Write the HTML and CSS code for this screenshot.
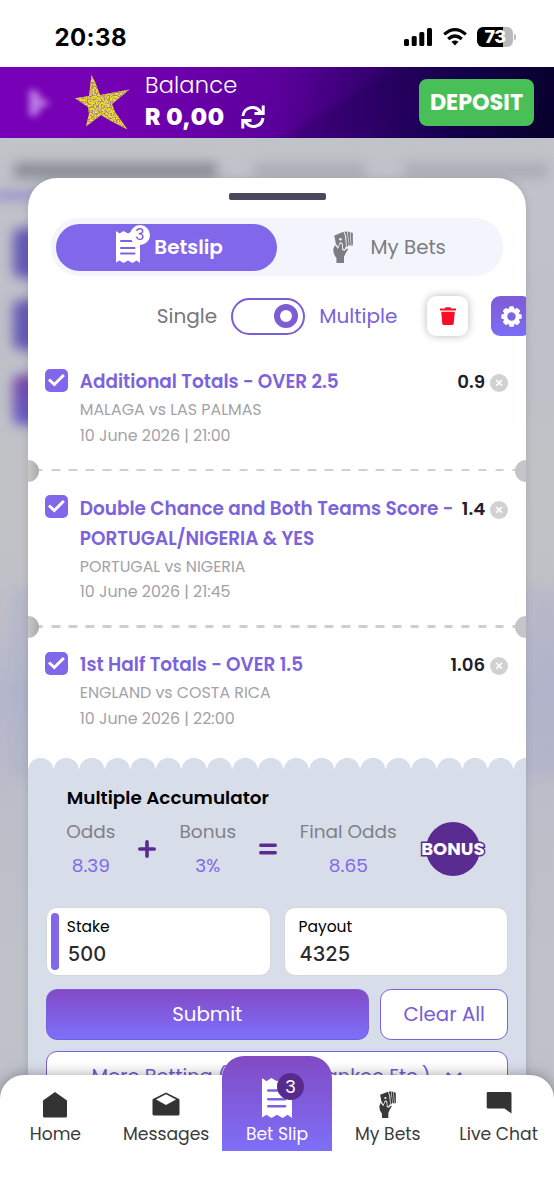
FILE: index.html
```
<!DOCTYPE html>
<html lang="en">
<head>
<meta charset="utf-8">
<title>Betslip</title>
<link rel="stylesheet" href="styles.css">
</head>
<body>
<svg class="defs" width="0" height="0" aria-hidden="true">
  <symbol id="receipt" viewBox="0 0 24 32">
    <path fill="currentColor" d="M0 1 Q0 0 1 .5 L3.500 2.600 L7.500 0 L12 2.600 L16.500 0 L20.500 2.600 L24 0 V32 L20.500 29.400 L16.500 32 L12 29.400 L7.500 32 L3.500 29.400 L0 31.500Z"/>
    <path class="receipt-lines" d="M5 10H16M5 17H18.500M5 22.500H18.500"/>
  </symbol>
  <symbol id="cash" viewBox="0 0 20 32">
    <g fill="currentColor">
      <path d="M1.300 4.500 L10.500 .8 L12 5 L13 15 L11.500 18.500 L10 17.500 L9.800 13 Q9 10.800 6.800 11.500 L5 16 L2.800 12.500Z"/>
      <path d="M11.400 .8 L14 .4 L15.800 14 L13.800 16.500 L13.200 5.500Z"/>
      <path d="M14.700 .6 L16.800 1 L17.800 13.500 L16.400 15Z"/>
      <path d="M17.500 1.300 L19.800 2 L19.900 14 L18.500 15.500Z"/>
      <path d="M2 14 L5 18 L7 13 Q9 11.500 9 15 L9.200 19 L11.500 19.800 L14.300 17.200 L15 18.500 L12.500 22.500 L11 26 V32 H3.500 L3.400 27 Q0 23 .3 18Z"/>
    </g>
    <circle class="cash-hole" cx="7.500" cy="8.300" r="1.300"/>
  </symbol>
  <symbol id="cross" viewBox="0 0 18 18">
    <circle cx="9" cy="9" r="9" fill="#d1d1d1"/>
    <path d="M6.300 6 L12 11.700M12 6 L6.300 11.700" stroke="#fff" stroke-width="1.700"/>
  </symbol>
  <symbol id="tick" viewBox="0 0 23 23">
    <rect width="23" height="23" rx="5" fill="#8167ea"/>
    <path d="M4 10.500 L9.300 15.500 L18.800 6" fill="none" stroke="#fff" stroke-width="3"/>
  </symbol>
</svg>
<div class="phone">
  <div class="status">
    <span class="clock">20:38</span>
    <div class="status-icons">
      <svg width="28" height="18" viewBox="0 0 28 18"><rect x="0" y="11" width="5" height="7" rx="1.500"/><rect x="7.700" y="8" width="5" height="10" rx="1.500"/><rect x="15.300" y="4" width="5" height="14" rx="1.500"/><rect x="23" y="0" width="5" height="18" rx="1.500"/></svg>
      <svg width="24" height="18" viewBox="0 0 24 18"><g fill="none" stroke="#000" stroke-width="3.200"><path d="M1.200 6.400 Q12 -3 22.800 6.400"/><path d="M5.200 11 Q12 5 18.800 11"/></g><path d="M8.500 13.800 Q12 11 15.500 13.800 L12 17.600Z"/></svg>
      <span class="battery"><span>73</span></span>
    </div>
  </div>

  <header class="header">
    <svg class="menu-blur" width="28" height="34" viewBox="0 0 28 34"><path d="M4 4 L12 4 L16 12 L26 17 L16 22 L12 30 L4 30Z" fill="#c58cec"/></svg>
    <svg class="star" width="56" height="56" viewBox="0 0 56 56">
      <filter id="grain" x="0" y="0" width="1" height="1">
        <feTurbulence type="fractalNoise" baseFrequency=".65" numOctaves="2" seed="7"/>
        <feColorMatrix values="0 0 0 0 .38  0 0 0 0 .26  0 0 0 0 .2  9 0 0 0 -4.100"/>
        <feComposite in2="SourceGraphic" operator="in" result="specks"/>
        <feMerge><feMergeNode in="SourceGraphic"/><feMergeNode in="specks"/></feMerge>
      </filter>
      <path filter="url(#grain)" fill="#f2dd22" d="M16.500 0 L20 7 L25 20 L54.500 14.500 L37 29 L40 37 L52.500 54.500 L36 46 L26 40 L11 51.500 L14 39 L13 32 L0 23.300 L14 21Z"/>
    </svg>
    <div class="balance">
      <span class="balance-label">Balance</span>
      <div class="balance-row"><b>R 0,00</b>
        <svg width="24" height="24" viewBox="0 0 24 24" fill="none" stroke="#fff" stroke-width="3"><path d="M2 11 C2.500 2 15 -1 20 8M22.200 .5 V8.500 H13.500"/><path d="M22 13 C21 22 9 25 4 16M1.800 23.500 V15.500 H10.500"/></svg>
      </div>
    </div>
    <button class="deposit">DEPOSIT</button>
  </header>

  <main class="stage">
    <div class="backdrop" aria-hidden="true">
      <i class="smudge heading"></i><i class="smudge heading second"></i><i class="smudge heading third"></i>
      <i class="smudge underline"></i><i class="smudge tile t1"></i><i class="smudge tile t2"></i><i class="smudge tile t3"></i>
      <i class="smudge haze"></i><i class="smudge haze right"></i>
    </div>

    <section class="sheet">
      <div class="grip"></div>
      <div class="tabs">
        <div class="tab active"><span class="slip-icon"><svg width="24" height="32"><use href="#receipt"/></svg><span class="count">3</span></span><b>Betslip</b></div>
        <div class="tab"><svg width="20" height="32"><use href="#cash"/></svg><span>My Bets</span></div>
      </div>
      <div class="mode">
        <span class="single">Single</span><span class="switch"><i></i></span><span class="multiple">Multiple</span>
        <button class="trash"><svg width="16" height="18" viewBox="0 0 16 18" fill="#f80c26"><path d="M0 1.500H5L5.500 .3H10.500L11 1.500H16V3.500H0Z"/><path d="M1.200 4.800H14.800L13.700 16.500Q13.500 18 12 18H4Q2.500 18 2.300 16.500Z"/></svg></button>
        <button class="gear"><svg width="21" height="21" viewBox="-10.500 -10.500 21 21"><g fill="#fff"><circle r="8.300"/><rect id="tooth" x="-2.600" y="-10.200" width="5.200" height="20.400" rx="1.500"/><use href="#tooth" transform="rotate(45)"/><use href="#tooth" transform="rotate(90)"/><use href="#tooth" transform="rotate(135)"/></g><circle r="4.200" fill="#7d65e4"/></svg></button>
      </div>

      <article class="bet">
        <svg class="check" width="23" height="23"><use href="#tick"/></svg>
        <div class="bet-body"><h3>Additional Totals − OVER 2.5</h3><p>MALAGA vs LAS PALMAS</p><p>10 June 2026 | 21:00</p></div>
        <b class="odd">0.9</b><svg class="remove" width="18" height="18"><use href="#cross"/></svg>
      </article>
      <div class="perforation"></div>
      <article class="bet">
        <svg class="check" width="23" height="23"><use href="#tick"/></svg>
        <div class="bet-body"><h3>Double Chance and Both Teams Score −<br>PORTUGAL/NIGERIA &amp; YES</h3><p>PORTUGAL vs NIGERIA</p><p>10 June 2026 | 21:45</p></div>
        <b class="odd">1.4</b><svg class="remove" width="18" height="18"><use href="#cross"/></svg>
      </article>
      <div class="perforation"></div>
      <article class="bet last">
        <svg class="check" width="23" height="23"><use href="#tick"/></svg>
        <div class="bet-body"><h3>1st Half Totals − OVER 1.5</h3><p>ENGLAND vs COSTA RICA</p><p>10 June 2026 | 22:00</p></div>
        <b class="odd">1.06</b><svg class="remove" width="18" height="18"><use href="#cross"/></svg>
      </article>

      <div class="scallop"></div>
      <div class="panel">
        <h2>Multiple Accumulator</h2>
        <div class="sum">
          <div class="col"><span>Odds</span><em>8.39</em></div>
          <svg width="18" height="18" viewBox="0 0 18 18"><path d="M9 1.800V16.200M1.800 9H16.200"/></svg>
          <div class="col"><span>Bonus</span><em>3%</em></div>
          <svg width="18" height="18" viewBox="0 0 18 18"><path d="M1.800 5.300H16.200M1.800 12.700H16.200"/></svg>
          <div class="col"><span>Final Odds</span><em>8.65</em></div>
          <div class="badge"><span>BONUS</span></div>
        </div>
        <div class="fields">
          <div class="field stake"><label>Stake</label><b>500</b></div>
          <div class="field"><label>Payout</label><b>4325</b></div>
        </div>
        <div class="actions"><button class="submit">Submit</button><button class="outline">Clear All</button></div>
        <button class="outline more"><span>More Betting (Doubles, Yankee Etc.)</span><svg width="18" height="12" viewBox="0 0 18 12"><path d="M2 2L9 9L16 2" fill="none" stroke="#7c60dc" stroke-width="3"/></svg></button>
      </div>
    </section>
  </main>

  <nav class="nav">
    <a><svg width="26" height="28" viewBox="0 0 26 28"><path d="M13 1 L25 9.500 V25 Q25 26.500 23.500 26.500 H2.500 Q1 26.500 1 25 V9.500Z"/></svg><span>Home</span></a>
    <a><svg width="28" height="26" viewBox="0 0 28 26"><path d="M14 1.500 L27 8 Q27.500 8.300 27.500 9 V23 Q27.500 24.500 26 24.500 H2 Q.5 24.500 .5 23 V9 Q.5 8.300 1 8Z"/><path class="flap" d="M14 3.200 L24 8.500 L14 14 L4 8.500Z"/></svg><span>Messages</span></a>
    <a class="current"><span class="slip-icon"><svg width="30" height="40"><use href="#receipt"/></svg><span class="count">3</span></span><span>Bet Slip</span></a>
    <a><svg width="17" height="27"><use href="#cash"/></svg><span>My Bets</span></a>
    <a><svg width="26" height="24" viewBox="0 0 26 24"><path d="M1.500 1 H24 Q25.500 1 25.500 2.500 V22.500 L18.500 17.500 H2 Q.7 17.500 .7 16 V2.500 Q.7 1 1.500 1Z"/></svg><span>Live Chat</span></a>
  </nav>
</div>
</body>
</html>
```
FILE: styles.css
```
* { box-sizing: border-box; }
body { margin: 0; background: #fff; font-family: Poppins, Inter, "Open Sans", sans-serif; }
button { font: inherit; border: 0; padding: 0; }
h2, h3, p { margin: 0; }
svg { display: block; flex: none; }
span, b { white-space: nowrap; }
.defs { position: absolute; }
.phone { position: relative; width: 554px; height: 1200px; overflow: hidden; display: flex; flex-direction: column; }

.status { height: 67px; padding: 3px 41px 0 54.500px; display: flex; align-items: center; justify-content: space-between; font-family: Inter, sans-serif; }
.clock { font-size: 24px; font-weight: 700; letter-spacing: .4px; margin-top: 4px; }
.status-icons { display: flex; align-items: center; gap: 10.500px; padding-top: 4px; }
.battery { position: relative; width: 36px; height: 20px; border-radius: 6px; background: linear-gradient(90deg, #000 73%, #b9b9b9 73%); color: #fff; font-weight: 800; font-size: 18px; line-height: 20px; letter-spacing: -.5px; text-align: center; }
.battery::after { content: ""; position: absolute; right: -3px; top: 7px; width: 2px; height: 6px; border-radius: 0 2px 2px 0; background: #b9b9b9; }

.header { height: 71px; display: flex; align-items: center; padding: 0 20px 0 25px; color: #fff; background: linear-gradient(148deg, transparent 58%, rgba(20,0,70,.25) 61%, transparent 80%), linear-gradient(100deg, #7900b9 0, #7200b1 25%, #5b009b 50%, #380074 64%, #14004c 81%, #07002b 100%); }
.menu-blur { filter: blur(3.500px); opacity: .85; margin-right: 22px; }
.balance { margin-left: 14px; flex: 1; margin-top: -3px; }
.balance-label { display: block; font-size: 22.500px; line-height: 32px; font-weight: 300; letter-spacing: .2px; }
.balance-row { display: flex; align-items: center; gap: 16px; font: 800 23px/32px Inter, sans-serif; letter-spacing: .6px; }
.deposit { width: 115px; height: 47px; border-radius: 8px; background: #49c057; color: #fff; font-size: 22.300px; font-weight: 700; }

.stage { position: relative; flex: 1; padding: 40px 28.300px 0; background: #bdc1ca; }
.backdrop { position: absolute; inset: 0; overflow: hidden; background: linear-gradient(#c0c4c9 0, #bdc0c9 18%, #c0c2c5 32%, #c0c1c7 43%, #b5b7cb 52%, #bbbdc8 62%, #bfc2c9 78%, #bdc0c8 100%); }
.smudge { position: absolute; filter: blur(6px); }
.heading { left: 14px; top: 25px; width: 203px; height: 15px; background: #888b93; }
.heading.second { left: 254px; width: 112px; background: #aaadb4; }
.heading.third { left: 404px; width: 144px; background: #aaadb4; }
.underline { left: -5px; top: 54px; width: 70px; height: 7px; background: #8d81cc; }
.tile { left: 13px; width: 60px; height: 50px; border-radius: 8px; background: #6659b5; }
.t1 { top: 90px; } .t2 { top: 162px; } .t3 { top: 237px; background: linear-gradient(#7845a8, #665cc9); }
.haze { left: 10px; top: 448px; width: 40px; height: 190px; background: #abaec9; opacity: .4; }
.haze.right { left: 525px; }

.sheet { position: relative; height: 1000px; border-radius: 29px 29px 0 0; overflow: hidden; background: #fff; box-shadow: 0 0 7px rgba(70,70,90,.2); }
.grip { width: 97px; height: 7px; margin: 15px auto 0; border-radius: 2px; background: #4b485b; }
.tabs { display: grid; grid-template-columns: 220.500px 1fr; height: 58px; margin: 18px 22.500px 0; padding: 5.500px; border-radius: 28px; background: #f3f5fd; }
.tab { display: flex; align-items: center; justify-content: center; gap: 18px; padding-left: 4px; border-radius: 24px; font-size: 19.800px; color: #7c7c82; }
.tab.active { gap: 14px; padding: 0 0 0 6px; color: #fff; background: #8167ea; }
.tab b { font-weight: 600; font-size: 20px; }
.slip-icon { position: relative; }
.slip-icon .count { position: absolute; left: 13.500px; top: -6px; width: 20px; height: 20px; border-radius: 50%; font-size: 15.500px; line-height: 20px; text-align: center; background: #fff; color: #7657d5; }
.receipt-lines { fill: none; stroke: #7b62df; stroke-width: 2; stroke-linecap: round; }
.cash-hole { fill: #f3f5fd; }

.mode { height: 72px; margin-top: 4px; padding-left: 128.500px; display: flex; align-items: center; font-size: 20px; color: #76767a; }
.mode > * { flex: none; }
.single { width: 74.500px; }
.switch { width: 74px; height: 37px; border: 2.500px solid #7c5dd2; border-radius: 19px; padding: 0 5.500px; display: flex; align-items: center; justify-content: flex-end; }
.switch i { width: 24px; height: 24px; border: 6px solid #7c5dd2; border-radius: 50%; }
.multiple { width: 108px; margin-left: 14px; color: #795fdb; }
.trash, .gear { display: flex; align-items: center; justify-content: center; height: 40px; }
.trash { width: 40.500px; border-radius: 9px; background: #fff; box-shadow: 0 0 8px rgba(0,0,0,.28); }
.gear { width: 40px; margin-left: 23.500px; border-radius: 9px; background: linear-gradient(#815bd5, #7b6cf7); }

.bet { display: flex; align-items: flex-start; padding: 22.500px 17.500px 20.500px 17px; }
.mode + .bet { padding-top: 15px; }
.bet.last { padding-bottom: 26px; }
.check { margin: 1.500px 11.500px 0 0; }
.bet-body { flex: 1; min-width: 0; }
h3 { font-size: 18.450px; line-height: 30px; font-weight: 600; color: #7c63dc; white-space: nowrap; }
.bet-body p { font-size: 15.850px; line-height: 25.600px; color: #a2a2a7; white-space: nowrap; }
.odd { font-size: 18.200px; line-height: 30px; font-weight: 600; color: #20202c; }
.remove { margin: 7px 0 0 5px; }
.perforation { position: relative; height: 2.500px; background: repeating-linear-gradient(90deg, #cfcfcf 0 8.500px, transparent 8.500px 17.070px) 6.500px 0; }
.perforation::before, .perforation::after { content: ""; position: absolute; top: -9px; width: 22px; height: 22px; border-radius: 50%; background: #bebec3; }
.perforation::before { left: -11px; background: linear-gradient(90deg, #c4c4c6 55%, #aaa 100%); }
.perforation::after { right: -11px; background: #c4c4c9; }

.scallop { height: 11.500px; background: radial-gradient(circle at 50% 12.500px, #d8ddea 12.300px, transparent 12.700px) 0 0 / 25.550px 11.500px repeat-x; }
.panel { height: 440px; padding: 13.500px 17.500px 0; background: #d8ddea; }
h2 { padding-left: 21px; font-size: 18.400px; line-height: 30px; font-weight: 600; }
.sum { display: grid; grid-template-columns: 58px 55px 66px 55px 105px 104px; width: 443px; height: 68px; margin: 2.500px 0 0 16px; align-items: center; justify-items: center; }
.sum > svg { fill: none; stroke: #5b2a91; stroke-width: 3.600; stroke-linecap: round; }
.col { display: flex; flex-direction: column; align-items: center; font-size: 18.500px; line-height: 34px; color: #7f8187; }
.col em { font-style: normal; color: #7f69e8; }
.badge { width: 54.500px; height: 54.500px; border-radius: 50%; background: #5a2b91; display: flex; align-items: center; justify-content: center; }
.badge span { margin-top: -2px; color: #fff; font-size: 18px; font-weight: 700; -webkit-text-stroke: 3px #5a2b91; paint-order: stroke fill; }
.fields { display: grid; grid-template-columns: 1fr 1fr; gap: 13px; margin-top: 24px; }
.field { position: relative; height: 69px; padding: 6px 14px; border: 1px solid #d6d6db; border-radius: 11px; background: #fff; display: flex; flex-direction: column; }
.stake { padding-left: 20px; }
.stake::before { content: ""; position: absolute; left: 4.500px; top: 5px; width: 7.500px; height: 57px; border-radius: 4px; background: #8167ea; }
.field label { font-size: 15.500px; line-height: 26px; }
.field b { font: 500 20px/28px Inter, sans-serif; color: #2b2b2d; padding-left: 1px; letter-spacing: .1px; }
.actions { display: grid; grid-template-columns: 1fr 128px; gap: 11.500px; margin-top: 12.500px; height: 51px; font-size: 19.800px; }
.submit { color: #fff; border: 1px solid #785fdb; border-radius: 11px; background: linear-gradient(#834ac6, #7d70fc); }
.outline { color: #775dd3; border: 1.500px solid #7c60dc; border-radius: 11px; background: #fff; }
.more { display: flex; justify-content: center; align-items: center; gap: 14px; width: 100%; height: 51px; margin-top: 11.500px; font-size: 19.300px; }

.nav { position: absolute; left: 0; right: 0; bottom: 0; height: 125px; display: grid; grid-template-columns: repeat(5, 1fr); align-items: start; border-radius: 24px 24px 0 0; background: #fff; box-shadow: 0 0 14px rgba(0,0,0,.35); color: #3a3a3a; font-size: 17.200px; }
.nav a { display: flex; flex-direction: column; align-items: center; height: 76px; padding-top: 16px; line-height: 26px; }
.nav a > svg { fill: #333; }
.nav a > span:last-child { margin-top: auto; margin-bottom: 4px; }
.nav .flap { fill: #fff; }
.nav .current { height: 95px; margin-top: -19px; padding-top: 22px; color: #fff; border-radius: 22px 22px 0 0; background: linear-gradient(#824ac3, #7e6ff8); }
.current .count { left: 15px; top: -5px; width: 27px; height: 27px; line-height: 27px; background: #562b8d; color: #fff; font-size: 18px; }
```
